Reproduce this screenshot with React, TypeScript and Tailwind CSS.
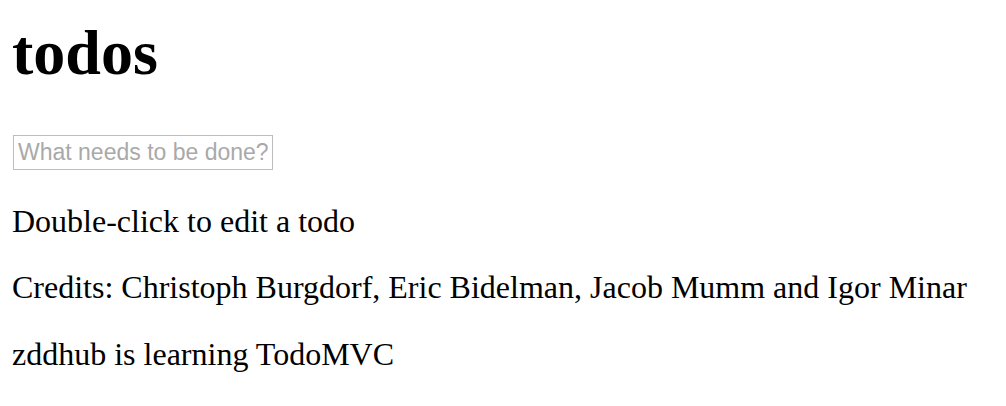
import React from "react";

export default function App() {
  return (
    <div className="min-h-[406px] bg-white px-[12px] text-black" style={{ fontFamily: '"Liberation Serif", "Times New Roman", serif' }}>
      <div className="pt-[17px]">
        <h1 className="m-0 text-[64px] font-bold leading-[71px]">todos</h1>
        <div className="mt-[47px] pl-[1px]">
          <input
            type="text"
            placeholder="What needs to be done?"
            className="box-border block h-[35px] w-[260px] border-[1.5px] border-[#bdbdbd] bg-white px-[4px] text-[23px] text-black outline-none placeholder:text-[#a9a9a9]"
            style={{ fontFamily: '"Liberation Sans", Arial, sans-serif' }}
          />
        </div>
        <p className="mt-[33px] text-[32px] leading-[36px]">Double-click to edit a todo</p>
        <p className="mt-[30px] text-[32px] leading-[36px]">
          Credits: Christoph Burgdorf, Eric Bidelman, Jacob Mumm and Igor Minar
        </p>
        <p className="mt-[31px] text-[32px] leading-[36px]">zddhub is learning TodoMVC</p>
      </div>
    </div>
  );
}
